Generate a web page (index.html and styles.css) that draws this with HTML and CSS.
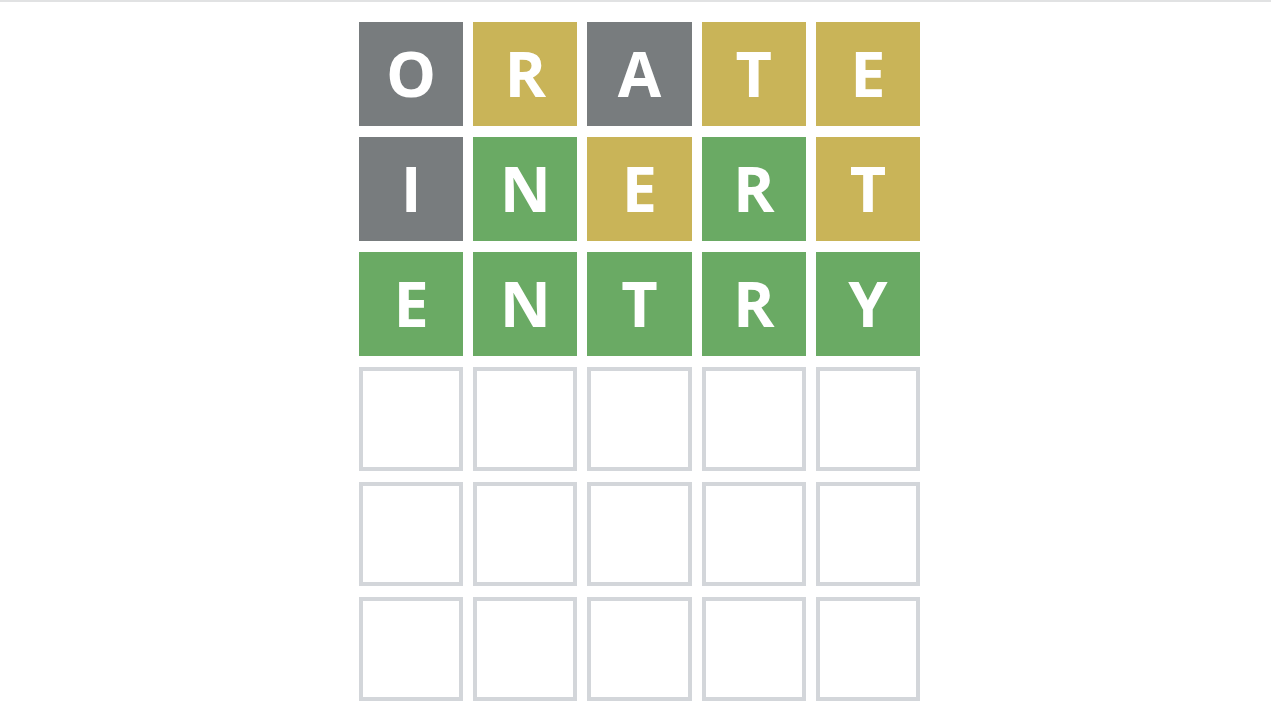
FILE: index.html
```html
<!DOCTYPE html>
<html lang="en">
<head>
  <meta charset="UTF-8">
  <meta name="viewport" content="width=device-width, initial-scale=1.0">
  <title>Wordle</title>
  <link rel="stylesheet" href="styles.css">
</head>
<body>

  <div class="topbar"></div>

  <div class="board">
    <div class="tile absent">O</div>
    <div class="tile present">R</div>
    <div class="tile absent">A</div>
    <div class="tile present">T</div>
    <div class="tile present">E</div>

    <div class="tile absent">I</div>
    <div class="tile correct">N</div>
    <div class="tile present">E</div>
    <div class="tile correct">R</div>
    <div class="tile present">T</div>

    <div class="tile correct">E</div>
    <div class="tile correct">N</div>
    <div class="tile correct">T</div>
    <div class="tile correct">R</div>
    <div class="tile correct">Y</div>

    <div class="tile empty"></div>
    <div class="tile empty"></div>
    <div class="tile empty"></div>
    <div class="tile empty"></div>
    <div class="tile empty"></div>

    <div class="tile empty"></div>
    <div class="tile empty"></div>
    <div class="tile empty"></div>
    <div class="tile empty"></div>
    <div class="tile empty"></div>

    <div class="tile empty"></div>
    <div class="tile empty"></div>
    <div class="tile empty"></div>
    <div class="tile empty"></div>
    <div class="tile empty"></div>
  </div>

</body>
</html>
```

FILE: styles.css
```css
* {
  box-sizing: border-box;
  margin: 0;
  padding: 0;
}

body {
  font-family: 'Open Sans', 'Liberation Sans', sans-serif;
  background-color: #fff;
  margin: 0;
}

.topbar {
  height: 2px;
  background: #e1e2e3;
}

.board {
  display: grid;
  grid-template-columns: repeat(5, 1fr);
  grid-auto-rows: 104px;
  column-gap: 10px;
  row-gap: 11px;
  width: 561px;
  margin: 20px 0 0 359px;
}

.tile {
  display: flex;
  justify-content: center;
  align-items: center;
  padding-bottom: 4px;
  color: #fff;
  font-size: 63px;
  font-weight: 700;
  line-height: 1;
}

.absent {
  background-color: #787c7e;
}

.present {
  background-color: #c9b458;
}

.correct {
  background-color: #6aaa64;
}

.empty {
  border: 4px solid #d3d6da;
}
```
